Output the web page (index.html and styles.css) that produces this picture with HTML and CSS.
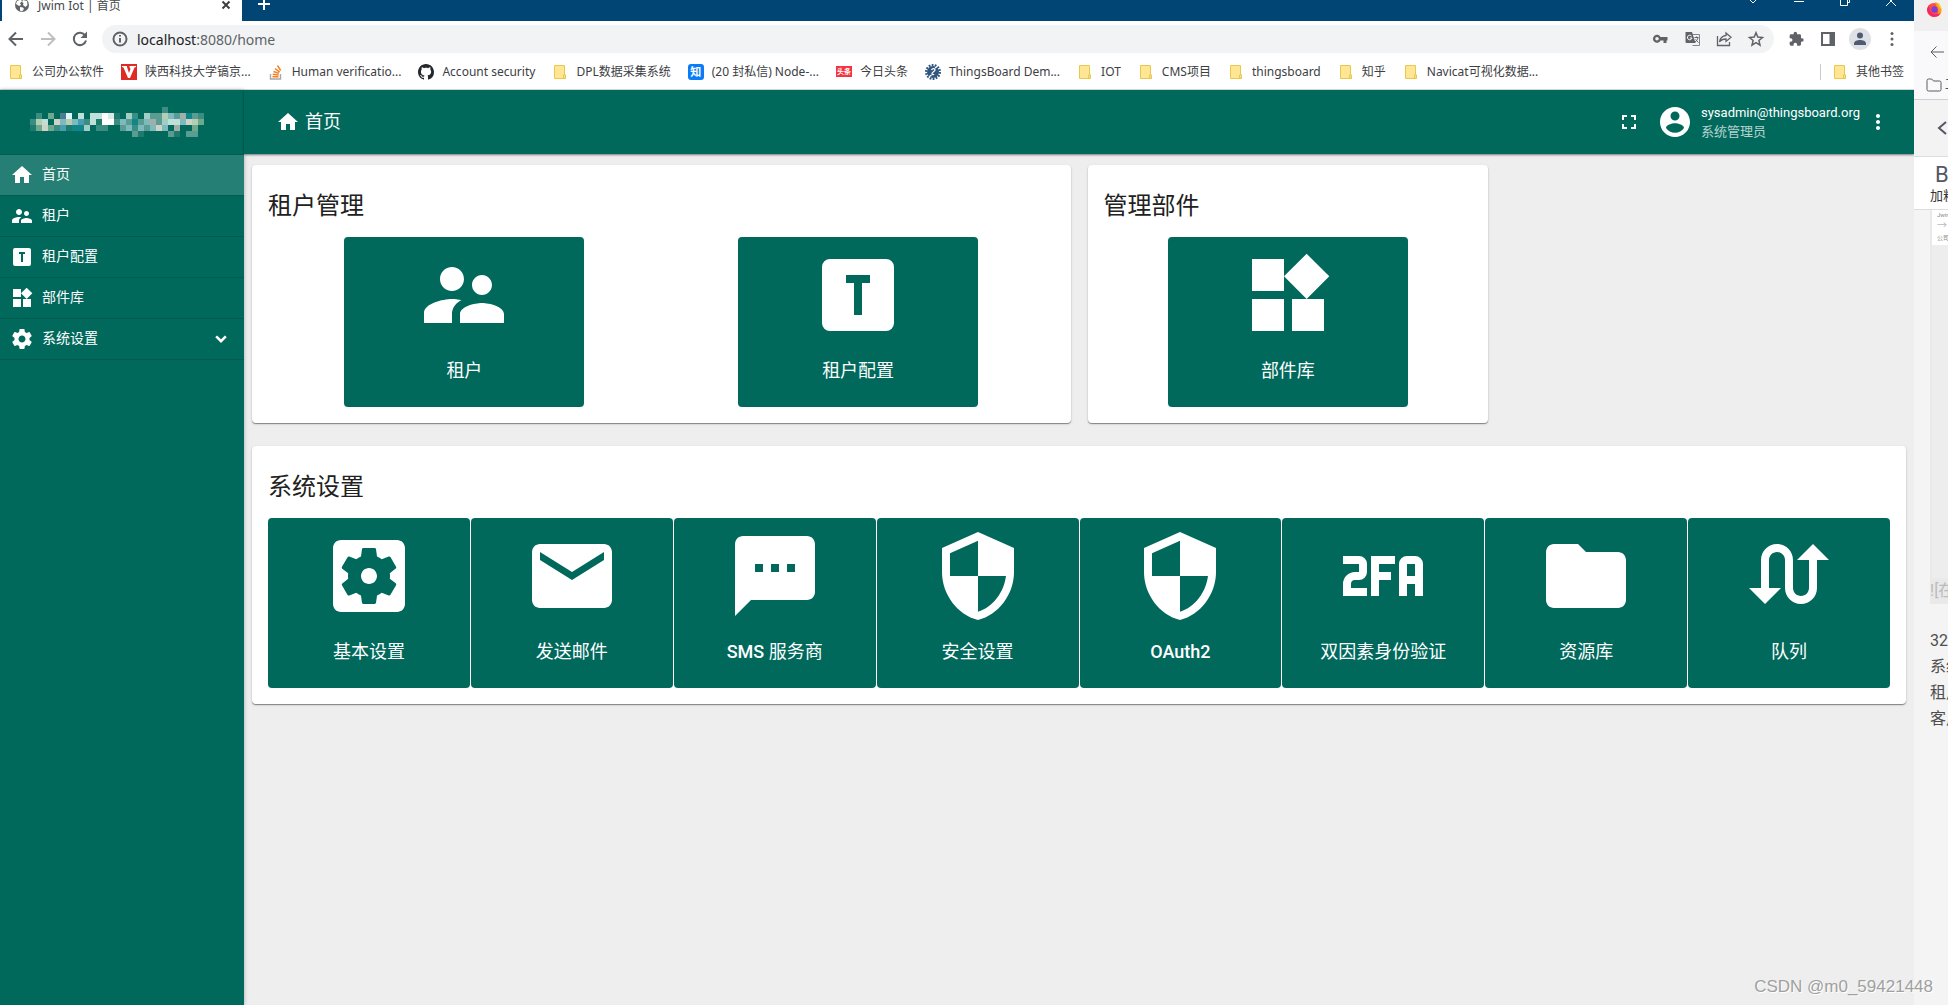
FILE: index.html
```html
<!DOCTYPE html>
<html lang="zh-CN">
<head>
<meta charset="utf-8">
<meta name="viewport" content="width=device-width, initial-scale=1">
<title>Jwim Iot | 首页</title>
<link rel="stylesheet" href="styles.css">
</head>
<body>
<svg class="sprite" aria-hidden="true">
  <symbol id="i-home" viewBox="0 0 24 24"><path d="M10 20v-6h4v6h5v-8h3L12 3 2 12h3v8z"/></symbol>
  <symbol id="i-people" viewBox="0 0 24 24"><path d="M16.5 12c1.38 0 2.49-1.12 2.49-2.5S17.88 7 16.5 7C15.12 7 14 8.12 14 9.5s1.12 2.5 2.5 2.5zM9 11c1.66 0 2.99-1.34 2.99-3S10.66 5 9 5C7.34 5 6 6.34 6 8s1.34 3 3 3zm7.5 3c-1.83 0-5.5.92-5.5 2.75V19h11v-2.25c0-1.83-3.67-2.75-5.5-2.75zM9 13c-2.33 0-7 1.17-7 3.5V19h7v-2.25c0-.85.33-2.34 2.37-3.47C10.5 13.1 9.66 13 9 13z"/></symbol>
  <symbol id="i-profile" viewBox="0 0 24 24"><path d="M5,3H19A2,2 0 0,1 21,5V19A2,2 0 0,1 19,21H5A2,2 0 0,1 3,19V5A2,2 0 0,1 5,3M9,7V9H11V17H13V9H15V7H9Z"/></symbol>
  <symbol id="i-widgets" viewBox="0 0 24 24"><path d="M13 13v8h8v-8h-8zM3 21h8v-8H3v8zM3 3v8h8V3H3zm13.66-1.31L11 7.34 16.66 13l5.66-5.66-5.66-5.65z"/></symbol>
  <symbol id="i-settings" viewBox="0 0 24 24"><path d="M19.43 12.98c.04-.32.07-.64.07-.98s-.03-.66-.07-.98l2.11-1.65c.19-.15.24-.42.12-.64l-2-3.46c-.12-.22-.39-.3-.61-.22l-2.49 1c-.52-.4-1.08-.73-1.69-.98l-.38-2.65C14.46 2.18 14.25 2 14 2h-4c-.25 0-.46.18-.49.42l-.38 2.65c-.61.25-1.17.59-1.69.98l-2.49-1c-.23-.09-.49 0-.61.22l-2 3.46c-.13.22-.07.49.12.64l2.11 1.65c-.04.32-.07.65-.07.98s.03.66.07.98l-2.11 1.65c-.19.15-.24.42-.12.64l2 3.46c.12.22.39.3.61.22l2.49-1c.52.4 1.08.73 1.69.98l.38 2.65c.03.24.24.42.49.42h4c.25 0 .46-.18.49-.42l.38-2.65c.61-.25 1.17-.59 1.69-.98l2.49 1c.23.09.49 0 .61-.22l2-3.46c.12-.22.07-.49-.12-.64l-2.11-1.65zM12 15.5c-1.93 0-3.5-1.57-3.5-3.5s1.57-3.5 3.5-3.5 3.5 1.57 3.5 3.5-1.57 3.5-3.5 3.5z"/></symbol>
  <symbol id="i-general" viewBox="0 0 24 24"><path d="M12 10c-1.1 0-2 .9-2 2s.9 2 2 2 2-.9 2-2-.9-2-2-2zm7-7H5c-1.11 0-2 .9-2 2v14c0 1.1.89 2 2 2h14c1.11 0 2-.9 2-2V5c0-1.1-.89-2-2-2zm-1.75 9c0 .23-.02.46-.05.68l1.48 1.16c.13.11.17.3.08.45l-1.4 2.42c-.09.15-.27.21-.43.15l-1.74-.7c-.36.28-.76.51-1.18.69l-.26 1.85c-.03.17-.18.3-.35.3h-2.8c-.17 0-.32-.13-.35-.29l-.26-1.85c-.43-.18-.82-.41-1.18-.69l-1.74.7c-.16.06-.34 0-.43-.15l-1.4-2.42c-.09-.15-.05-.34.08-.45l1.48-1.16c-.03-.23-.05-.46-.05-.69 0-.23.02-.46.05-.68l-1.48-1.16c-.13-.11-.17-.3-.08-.45l1.4-2.42c.09-.15.27-.21.43-.15l1.74.7c.36-.28.76-.51 1.18-.69l.26-1.85c.03-.17.18-.3.35-.3h2.8c.17 0 .32.13.35.29l.26 1.85c.43.18.82.41 1.18.69l1.74-.7c.16-.06.34 0 .43.15l1.4 2.42c.09.15.05.34-.08.45l-1.48 1.16c.03.23.05.46.05.69z"/></symbol>
  <symbol id="i-mail" viewBox="0 0 24 24"><path d="M20 4H4c-1.1 0-1.99.9-1.99 2L2 18c0 1.1.9 2 2 2h16c1.1 0 2-.9 2-2V6c0-1.1-.9-2-2-2zm0 4l-8 5-8-5V6l8 5 8-5v2z"/></symbol>
  <symbol id="i-sms" viewBox="0 0 24 24"><path d="M20 2H4c-1.1 0-1.99.9-1.99 2L2 22l4-4h14c1.1 0 2-.9 2-2V4c0-1.1-.9-2-2-2zM9 11H7V9h2v2zm4 0h-2V9h2v2zm4 0h-2V9h2v2z"/></symbol>
  <symbol id="i-security" viewBox="0 0 24 24"><path d="M12 1L3 5v6c0 5.55 3.84 10.74 9 12 5.16-1.26 9-6.45 9-12V5l-9-4zm0 10.99h7c-.53 4.12-3.28 7.79-7 8.94V12H5V6.3l7-3.11v8.8z"/></symbol>
  <symbol id="i-2fa" viewBox="0 0 24 24"><path fill="none" stroke="currentColor" stroke-width="2" d="M2 8h4a1 1 0 0 1 1 1v2a1 1 0 0 1-1 1H5a2 2 0 0 0-2 2v2h5M10 17V8h5M10 12h4M17 17V9a1 1 0 0 1 1-1h2a1 1 0 0 1 1 1v8M17 13h4"/></symbol>
  <symbol id="i-folder" viewBox="0 0 24 24"><path d="M10 4H4c-1.1 0-1.99.9-1.99 2L2 18c0 1.1.9 2 2 2h16c1.1 0 2-.9 2-2V8c0-1.1-.9-2-2-2h-8l-2-2z"/></symbol>
  <symbol id="i-queue" viewBox="0 0 24 24"><path d="M18 4l-4 4h3v7c0 1.1-.9 2-2 2s-2-.9-2-2V8c0-2.21-1.79-4-4-4S5 5.79 5 8v7H2l4 4 4-4H7V8c0-1.1.9-2 2-2s2 .9 2 2v7c0 2.21 1.79 4 4 4s4-1.79 4-4V8h3l-4-4z"/></symbol>
  <symbol id="i-more" viewBox="0 0 24 24"><path d="M12 8c1.1 0 2-.9 2-2s-.9-2-2-2-2 .9-2 2 .9 2 2 2zm0 2c-1.1 0-2 .9-2 2s.9 2 2 2 2-.9 2-2-.9-2-2-2zm0 6c-1.1 0-2 .9-2 2s.9 2 2 2 2-.9 2-2-.9-2-2-2z"/></symbol>
  <symbol id="b-folder" viewBox="0 0 16 16"><path fill="#ffe694" stroke="#e8c84e" d="M2.500 1.500h10v9.500h1v3.500h-11z"/><path fill="#ffe694" stroke="#e8c84e" d="M11.500 14v-3h2v3z"/></symbol>
</svg>

<div class="desktop">
  <div class="browser">
    <div class="tabstrip">
      <div class="tab">
        <svg class="ic16" viewBox="0 0 16 16"><circle cx="8" cy="8" r="7" fill="#5f6368"/><path fill="#fff" d="M3 4l4-1.500 1 2-2 1.500 1 2-2 1-3-2zM9 3l4 1 .5 4-2 2-2.500-2 .5-2-1.500-1zM6 10l3 .5 1 1.500-2 2.500-2-1z"/></svg>
        <span class="tab-title">Jwim Iot | 首页</span>
        <button class="plain" aria-label="关闭标签页"><svg class="ic16" viewBox="0 0 16 16"><path class="ln" stroke="#3c4043" d="M4.500 4.500l7 7m0-7l-7 7"/></svg></button>
      </div>
      <button class="plain newtab" aria-label="新标签页"><svg class="ic16" viewBox="0 0 16 16"><path class="ln" stroke="#fff" d="M8 2v12M2 8h12"/></svg></button>
      <div class="winctl">
        <button class="plain" aria-label="搜索标签页"><svg class="ic16" viewBox="0 0 16 16"><path class="ln1" stroke="#fff" d="M4 3l4 4 4-4"/></svg></button>
        <button class="plain" aria-label="最小化"><svg class="ic16" viewBox="0 0 16 16"><path class="ln1" stroke="#fff" d="M3 5.500h10"/></svg></button>
        <button class="plain" aria-label="还原"><svg class="ic16" viewBox="0 0 16 16"><path class="ln1" stroke="#fff" d="M3.500 1.500h7v8h-7zM10.500 6.500h2v-7"/></svg></button>
        <button class="plain" aria-label="关闭"><svg class="ic16" viewBox="0 0 16 16"><path class="ln1" stroke="#fff" d="M3 0l10 10M13 0L3 10"/></svg></button>
      </div>
    </div>

    <div class="toolbar">
      <button class="plain" aria-label="后退"><svg class="ic16" viewBox="0 0 16 16"><path class="ln" stroke="#5f6368" d="M15 8H2.500M8 1.500L1.500 8 8 14.500"/></svg></button>
      <button class="plain" aria-label="前进"><svg class="ic16" viewBox="0 0 16 16"><path class="ln" stroke="#bdbfc1" d="M1 8h12.500M8 1.500L14.500 8 8 14.500"/></svg></button>
      <button class="plain" aria-label="重新加载"><svg class="ic16" viewBox="0 0 16 16"><path class="ln" stroke="#5f6368" d="M13.200 4.500A6.200 6.200 0 1 0 14 9.500"/><path fill="#5f6368" d="M15 .5V7H8.500z"/></svg></button>
      <div class="omnibox">
        <svg class="ic16" viewBox="0 0 16 16"><circle class="ln" stroke="#5f6368" cx="8" cy="8" r="6.500"/><path class="ln" stroke="#5f6368" d="M8 7v4.500M8 4v1.600"/></svg>
        <div class="url"><label for="url">localhost</label><input id="url" type="text" value=":8080/home"></div>
        <button class="plain" aria-label="密码"><svg class="ic16" viewBox="0 0 16 16"><path fill="#5f6368" fill-rule="evenodd" d="M8.500 6H15.500v3.500H14.500V12h-3V9.500h-3A4 4 0 1 1 8.500 6zM5 6a1.800 1.800 0 1 0 0 3.600A1.800 1.800 0 0 0 5 6z"/></svg></button>
        <button class="plain" aria-label="翻译此页"><svg class="ic16" viewBox="0 0 16 16"><path fill="none" stroke="#80868b" d="M6 3.500h9.500v11H8.500"/><path fill="#5f6368" d="M1.500 1H8l3.500 11H2.500a1 1 0 0 1-1-1z"/><path fill="none" stroke="#fff" d="M7.500 5A2.300 2.300 0 1 0 8 7H5.800"/><path fill="none" stroke="#5f6368" d="M10.500 6.500h4M12.500 5.500v1M14 6.500c-.5 2-1.500 3.500-3 4.500M11.500 8.500l3 3"/></svg></button>
        <button class="plain" aria-label="分享"><svg class="ic16" viewBox="0 0 16 16"><path fill="none" stroke="#5f6368" stroke-width="1.300" d="M1.500 5v9.500h12V11M10 2l5 4.200-5 4.200V8c-3 0-5 .8-6.500 3C4 7.500 6 5 10 4.500z"/></svg></button>
        <button class="plain" aria-label="收藏"><svg class="ic16" viewBox="0 0 16 16"><path fill="none" stroke="#5f6368" stroke-width="1.500" d="M8 1.800l1.800 4.300 4.700.4-3.600 3 1.100 4.600L8 11.700l-4 2.400 1.100-4.600-3.600-3 4.700-.4z"/></svg></button>
      </div>
      <button class="plain" aria-label="扩展程序"><svg class="ic16" viewBox="0 0 24 24"><path fill="#5f6368" d="M21 11h-1.500V7a2 2 0 0 0-2-2h-4V3.500a2.500 2.500 0 0 0-5 0V5h-4a2 2 0 0 0-2 2v3.800H4a2.700 2.700 0 0 1 0 5.400H2.500V20a2 2 0 0 0 2 2h3.800v-1.500a2.700 2.700 0 0 1 5.400 0V22h3.800a2 2 0 0 0 2-2v-4H21a2.500 2.500 0 0 0 0-5z"/></svg></button>
      <button class="plain" aria-label="侧边栏"><svg class="ic16" viewBox="0 0 16 16"><path fill="#5f6368" fill-rule="evenodd" d="M1 1h14v14H1zM3 3v10h6.500V3z"/></svg></button>
      <button class="plain avatar" aria-label="个人资料"><svg class="ic16" viewBox="0 0 16 16"><circle cx="8" cy="4.500" r="3" fill="#505a70"/><path fill="#505a70" d="M2 14v-1.500C2 10 5.500 9 8 9s6 1 6 3.500V14z"/></svg></button>
      <button class="plain" aria-label="菜单"><svg class="ic16" viewBox="0 0 16 16"><g fill="#5f6368"><circle cx="8" cy="2.500" r="1.500"/><circle cx="8" cy="8" r="1.500"/><circle cx="8" cy="13.500" r="1.500"/></g></svg></button>
    </div>

    <nav class="bookmarks" aria-label="书签栏">
      <a href="#"><svg class="ic16"><use href="#b-folder"/></svg>公司办公软件</a>
      <a href="#"><svg class="ic16" viewBox="0 0 16 16"><path fill="#de2c25" d="M0 0h16v16H0z"/><path fill="#fff" d="M1 2h5v1l2 6 1.500-4L8.500 3V2H15v1l-1.500.5L9 14H7L2.500 3.500 1 3z"/></svg>陕西科技大学镐京...</a>
      <a href="#"><svg class="ic16" viewBox="0 0 16 16"><path fill="none" stroke="#a6a8ab" stroke-width="1.400" d="M2.500 10v5h10v-5"/><path fill="none" stroke="#f48024" stroke-width="1.400" d="M4.500 12.800h6M4.700 10.300l6 .7M5.500 7.500l5.500 1.900M7 4.500l4.700 3.600M9.500 1.500l3.200 5"/></svg>Human verificatio...</a>
      <a href="#"><svg class="ic16" viewBox="0 0 16 16"><path fill="#24292f" d="M8 0C3.580 0 0 3.580 0 8c0 3.540 2.290 6.530 5.470 7.590.4.070.55-.17.55-.38 0-.19-.01-.82-.01-1.490-2.010.37-2.530-.49-2.690-.94-.09-.23-.48-.94-.82-1.130-.28-.15-.68-.52-.01-.53.63-.01 1.080.58 1.230.82.72 1.210 1.870.87 2.330.66.07-.52.28-.87.51-1.070-1.780-.2-3.640-.89-3.640-3.950 0-.87.31-1.590.82-2.150-.08-.2-.36-1.020.08-2.120 0 0 .67-.21 2.200.82.64-.18 1.320-.27 2-.27s1.360.09 2 .27c1.530-1.040 2.200-.82 2.200-.82.44 1.100.16 1.920.08 2.120.51.56.82 1.270.82 2.150 0 3.070-1.870 3.750-3.650 3.950.29.25.54.73.54 1.480 0 1.070-.01 1.930-.01 2.200 0 .21.15.46.55.38A8.010 8.010 0 0 0 16 8c0-4.420-3.580-8-8-8z"/></svg>Account security</a>
      <a href="#"><svg class="ic16"><use href="#b-folder"/></svg>DPL数据采集系统</a>
      <a href="#"><span class="fav zhi">知</span>(20 封私信) Node-...</a>
      <a href="#"><span class="fav tt">头条</span>今日头条</a>
      <a href="#"><svg class="ic16" viewBox="0 0 16 16"><circle cx="8" cy="8" r="6.800" fill="none" stroke="#305680" stroke-width="2.400" stroke-dasharray="1.800 1.250"/><circle cx="8" cy="8" r="6" fill="#305680"/><path fill="none" stroke="#fff" stroke-width="1.300" d="M6.500 6c1-2 3.500-1.500 3.500 0S7 8 7 9.500s1.500 1.500 2 .5M10 4l2-1.500M6.500 11L4 13"/></svg>ThingsBoard Dem...</a>
      <a href="#"><svg class="ic16"><use href="#b-folder"/></svg>IOT</a>
      <a href="#"><svg class="ic16"><use href="#b-folder"/></svg>CMS项目</a>
      <a href="#"><svg class="ic16"><use href="#b-folder"/></svg>thingsboard</a>
      <a href="#"><svg class="ic16"><use href="#b-folder"/></svg>知乎</a>
      <a href="#"><svg class="ic16"><use href="#b-folder"/></svg>Navicat可视化数据...</a>
      <a href="#" class="other"><svg class="ic16"><use href="#b-folder"/></svg>其他书签</a>
    </nav>

    <div class="app">
      <aside class="sidebar">
        <div class="brand">
          <svg viewBox="0 0 29 5" shape-rendering="crispEdges" role="img" aria-label="徽标">
            <path fill="#3a8d80" d="M22 0h1v1h-1zM1 1h1v1H1zM17 1h1v1h-1zM0 2h1v1H0zM9 2h1v1H9zM14 2h1v1h-1zM4 3h1v1H4zM11 3h2v1h-2zM17 3h1v1h-1zM28 1h1v1h-1z"/>
            <path fill="#6fa98d" d="M3 1h1v1H3zM1 3h1v1H1zM3 3h1v1H3zM27 3h1v1h-1zM28 2h1v1h-1z"/>
            <path fill="#4a7f8e" d="M5 1h1v1H5z"/>
            <path fill="#dff5fb" d="M6 1h1v1H6z"/>
            <path fill="#bfe0d8" d="M8 1h1v1H8zM2 2h1v1H2zM10 1h2v1h-2zM10 2h1v1h-1zM23 2h2v1h-2z"/>
            <path fill="#dbeae6" d="M13 1h1v1h-1z"/>
            <path fill="#ffffff" d="M12 1h1v2h-1zM13 2h1v1h-1z"/>
            <path fill="#a0cdc4" d="M16 1h1v1h-1zM19 1h1v1h-1zM9 3h1v1H9zM22 2h1v1h-1z"/>
            <path fill="#5a9c92" d="M20 1h2v1h-2zM24 1h1v1h-1zM27 1h1v1h-1zM16 2h1v1h-1zM18 2h1v1h-1zM21 2h1v1h-1zM15 3h1v1h-1zM19 3h1v1h-1zM17 4h1v1h-1zM26 4h1v1h-1zM27 4h1v1h-1zM23 4h1v1h-1z"/>
            <path fill="#b5cdb0" d="M22 1h1v1h-1zM6 2h1v1H6zM1 2h1v1H1zM27 2h1v1h-1z"/>
            <path fill="#7fb9c0" d="M23 1h1v1h-1zM7 2h1v1H7zM5 2h1v1H5zM15 2h1v1h-1zM19 2h1v1h-1zM16 3h1v1h-1zM18 3h1v1h-1zM25 2h1v1h-1zM20 3h1v1h-1zM22 3h1v1h-1z"/>
            <path fill="#a0b0a8" d="M25 1h1v1h-1zM20 2h1v1h-1zM24 3h1v1h-1z"/>
            <path fill="#0f868a" d="M26 1h1v1h-1zM7 3h2v1H7zM17 2h1v1h-1z"/>
            <path fill="#d0d2c8" d="M4 2h1v1H4zM2 3h1v1H2zM21 3h1v1h-1zM26 2h1v1h-1z"/>
            <path fill="#4a9cb0" d="M8 2h1v1H8zM5 3h1v1H5z"/>
            <path fill="#1d7a6c" d="M0 3h1v1H0zM6 3h1v1H6zM11 2h1v1h-1zM14 1h1v1h-1zM18 4h1v1h-1zM24 4h1v1h-1z"/>
          </svg>
        </div>
        <nav class="menu">
          <a href="#" class="active"><svg class="ic24"><use href="#i-home"/></svg><span>首页</span></a>
          <a href="#"><svg class="ic24"><use href="#i-people"/></svg><span>租户</span></a>
          <a href="#"><svg class="ic24"><use href="#i-profile"/></svg><span>租户配置</span></a>
          <a href="#"><svg class="ic24"><use href="#i-widgets"/></svg><span>部件库</span></a>
          <a href="#"><svg class="ic24"><use href="#i-settings"/></svg><span>系统设置</span><svg class="ic16 caret" viewBox="0 0 16 16"><path fill="none" stroke="currentColor" stroke-width="3" d="M2.500 5L8 10.500 13.500 5"/></svg></a>
        </nav>
      </aside>

      <div class="page">
        <header class="topbar">
          <h1><svg class="ic24"><use href="#i-home"/></svg>首页</h1>
          <button class="plain full" aria-label="全屏"><svg class="ic24" viewBox="0 0 24 24"><path d="M7 14H5v5h5v-2H7v-3zm-2-4h2V7h3V5H5v5zm12 7h-3v2h5v-5h-2v3zM14 5v2h3v3h2V5h-5z"/></svg></button>
          <svg class="ic36" viewBox="0 0 24 24"><path d="M12 2C6.480 2 2 6.480 2 12s4.480 10 10 10 10-4.480 10-10S17.520 2 12 2zm0 3c1.660 0 3 1.340 3 3s-1.340 3-3 3-3-1.340-3-3 1.340-3 3-3zm0 14.200c-2.500 0-4.710-1.280-6-3.220.03-1.990 4-3.080 6-3.080 1.990 0 5.970 1.090 6 3.080-1.290 1.940-3.500 3.220-6 3.220z"/></svg>
          <div class="user"><span>sysadmin@thingsboard.org</span><span class="role">系统管理员</span></div>
          <button class="plain" aria-label="更多"><svg class="ic24"><use href="#i-more"/></svg></button>
        </header>

        <main class="content">
          <section class="card half">
            <h2>租户管理</h2>
            <div class="tiles two">
              <a href="#" class="tile"><svg class="ic96"><use href="#i-people"/></svg><span>租户</span></a>
              <a href="#" class="tile"><svg class="ic96"><use href="#i-profile"/></svg><span>租户配置</span></a>
            </div>
          </section>
          <section class="card">
            <h2>管理部件</h2>
            <div class="tiles one">
              <a href="#" class="tile"><svg class="ic96"><use href="#i-widgets"/></svg><span>部件库</span></a>
            </div>
          </section>
          <section class="card wide">
            <h2>系统设置</h2>
            <div class="tiles eight">
              <a href="#" class="tile"><svg class="ic96"><use href="#i-general"/></svg><span>基本设置</span></a>
              <a href="#" class="tile"><svg class="ic96"><use href="#i-mail"/></svg><span>发送邮件</span></a>
              <a href="#" class="tile"><svg class="ic96"><use href="#i-sms"/></svg><span><b>SMS</b> 服务商</span></a>
              <a href="#" class="tile"><svg class="ic96"><use href="#i-security"/></svg><span>安全设置</span></a>
              <a href="#" class="tile"><svg class="ic96"><use href="#i-security"/></svg><span><b>OAuth2</b></span></a>
              <a href="#" class="tile"><svg class="ic96"><use href="#i-2fa"/></svg><span>双因素身份验证</span></a>
              <a href="#" class="tile"><svg class="ic96"><use href="#i-folder"/></svg><span>资源库</span></a>
              <a href="#" class="tile"><svg class="ic96"><use href="#i-queue"/></svg><span>队列</span></a>
            </div>
          </section>
        </main>
      </div>
    </div>
  </div>

  <div class="second">
    <div class="s-tabs"><svg class="ic16" viewBox="0 0 16 16"><circle cx="8" cy="9" r="7" fill="#ff4f3a"/><path fill="#ff9a1f" d="M9 1c3 1 6.500 3.500 6.500 8.500S11 16 8 16c4-1 5-4 4-7S9.500 4 9 1z"/><path fill="#ffd23c" d="M12 1.500c2 1.500 3.800 4 3.500 8-1-3-3.500-4-3.500-8z"/><path fill="#f5256b" d="M1 8c.5 5 4 8 8 7.800C13 15.500 14 13 14 12c-3 2.500-9 2-10-3L3 4z"/><circle cx="8.500" cy="8.500" r="3.200" fill="#7a3fe0"/></svg></div>
    <div class="s-nav"><svg class="ic16" viewBox="0 0 16 16"><path class="ln1" stroke="#5b5b66" d="M15 8H2M7.500 2.500L2 8l5.500 5.500"/></svg></div>
    <div class="s-marks"><svg class="ic16" viewBox="0 0 16 16"><path class="ln1" stroke="#5b5b66" d="M1 3.500a1.500 1.500 0 0 1 1.500-1.500h3.200l1.800 2h6a1.500 1.500 0 0 1 1.500 1.500v7a1.500 1.500 0 0 1-1.500 1.500h-11A1.500 1.500 0 0 1 1 12.500z"/></svg><span>工</span></div>
    <div class="s-head"><svg class="ic16" viewBox="0 0 16 16"><path class="ln" stroke="#555666" d="M12 2L5 8l7 6"/></svg></div>
    <div class="s-tool"><b>B</b><span>加粗</span></div>
    <div class="s-body">
      <div class="s-shot">
        <div class="thumb"><span>Jwim</span><span class="arrow">→</span><span>公司办</span></div>
        <p>![在</p>
      </div>
      <p>32</p>
      <p>系统</p>
      <p>租户</p>
      <p>客户</p>
    </div>
  </div>
  <div class="watermark">CSDN @m0_59421448</div>
</div>
</body>
</html>
```
FILE: styles.css
```css
* { box-sizing: border-box; }

:root {
  --green: #00695c;
  --latin: Roboto, "Noto Sans CJK SC", sans-serif;
  --chrome: "Noto Sans", "Noto Sans CJK SC", sans-serif;
}

body { margin: 0; font-family: var(--latin); overflow-x: hidden; }
h1, h2, p { margin: 0; font-weight: 400; }
a { color: inherit; text-decoration: none; }
svg { display: block; flex: none; fill: currentColor; }

.sprite { position: absolute; width: 0; height: 0; }
.ic16 { width: 16px; height: 16px; overflow: visible; }
.ic24 { width: 24px; height: 24px; }
.ic36 { width: 36px; height: 36px; }
.ic96 { width: 96px; height: 96px; }
.ln { fill: none; stroke-width: 2; }
.ln1 { fill: none; stroke-width: 1; }

.plain {
  display: flex;
  align-items: center;
  justify-content: center;
  flex: none;
  padding: 0;
  border: 0;
  background: none;
  color: inherit;
}

.desktop { position: relative; display: flex; min-height: 100vh; }
.browser { flex: 1; min-width: 0; display: flex; flex-direction: column; background: #fff; }

/* Tab strip */
.tabstrip {
  display: flex;
  align-items: flex-end;
  height: 21px;
  overflow: hidden;
  background: #004574;
  font-family: var(--chrome);
  font-size: 12px;
}
.tab {
  display: flex;
  align-items: center;
  gap: 8px;
  width: 240px;
  height: 33px;
  margin-left: 2px;
  padding: 0 8px 0 12px;
  background: #fff;
  color: #45494d;
}
.tab-title { flex: 1; }
.newtab { height: 34px; margin-left: 14px; }
.winctl { display: flex; gap: 30px; height: 34px; margin-left: auto; padding-right: 15px; }

/* Address row */
.toolbar {
  display: flex;
  align-items: center;
  gap: 16px;
  height: 36px;
  padding: 0 14px 0 8px;
}
.omnibox {
  flex: 1;
  display: flex;
  align-items: center;
  gap: 16px;
  height: 28px;
  margin-left: -2px;
  margin-right: -2px;
  padding: 0 10px;
  border-radius: 14px;
  background: #f1f3f4;
}
.url {
  flex: 1;
  display: flex;
  align-items: center;
  margin-left: -7px;
  font-family: var(--chrome);
  font-size: 14px;
  color: #202124;
}
.url input {
  flex: 1;
  padding: 0;
  border: 0;
  outline: 0;
  background: none;
  font: inherit;
  color: #5f6368;
}
.avatar { width: 22px; height: 22px; margin: 0 -3px; border-radius: 50%; background: #dee1e6; }

/* Bookmarks row */
.bookmarks {
  display: flex;
  align-items: center;
  gap: 17px;
  height: 33px;
  padding: 0 10px 3px 8px;
  border-bottom: 1px solid #d5e0de;
  font-family: var(--chrome);
  font-size: 12px;
  line-height: 20px;
  color: #3c4043;
  white-space: nowrap;
}
.bookmarks a { display: flex; align-items: center; gap: 8px; }
.bookmarks .other { margin-left: auto; padding-left: 11px; border-left: 1px solid #c8cacc; line-height: 16px; }
.fav {
  display: flex;
  align-items: center;
  justify-content: center;
  width: 16px;
  height: 16px;
  color: #fff;
  font-weight: 700;
}
.zhi { border-radius: 3px; background: #0a7cf7; font-size: 11px; }
.tt { height: 11px; background: #f5343f; font-size: 7px; }

/* Application */
.app { flex: 1; display: flex; background: #eee; }
.sidebar {
  width: 244px;
  flex: none;
  background: var(--green);
  color: #fff;
  box-shadow: 0 0 4px rgba(0, 0, 0, .3);
}
.brand {
  display: flex;
  align-items: center;
  height: 65px;
  padding: 0 30px;
  border-bottom: 1px solid #005c51;
}
.brand svg { width: 174px; height: 30px; }
.menu a {
  display: flex;
  align-items: center;
  gap: 8px;
  height: 41px;
  padding: 0 16px 0 10px;
  border-bottom: 1px solid #005c51;
  font-size: 14px;
}
.menu a span { flex: 1; padding-bottom: 4px; }
.menu .active { background: #267f74; }
.menu .caret { width: 14px; height: 14px; }

.page { flex: 1; min-width: 0; }
.topbar {
  display: flex;
  align-items: center;
  height: 64px;
  padding: 0 24px 0 32px;
  background: var(--green);
  color: #fff;
  box-shadow: 0 1px 2px rgba(0, 0, 0, .5);
}
.topbar h1 { display: flex; align-items: center; gap: 5px; font-size: 18px; line-height: 26px; }
.full { margin: 0 16px 0 auto; }
.user {
  display: flex;
  flex-direction: column;
  width: 165px;
  margin-left: 8px;
  font-size: 13px;
  line-height: 19px;
}
.role { opacity: .7; }

.content {
  display: grid;
  grid-template-columns: repeat(4, 1fr);
  gap: 23px 17px;
  padding: 11px 8px;
}
.card {
  padding: 24px 16px 16px;
  border-radius: 4px;
  background: #fff;
  box-shadow: 0 1px 1px rgba(0, 0, 0, .4), 0 1px 3px rgba(0, 0, 0, .12);
}
.half { grid-column: span 2; }
.wide { grid-column: span 4; }
.card h2 { margin-bottom: 14px; font-size: 24px; line-height: 34px; color: #212121; }
.tiles { display: grid; justify-items: center; gap: 1px; }
.two { grid-template-columns: repeat(2, 1fr); }
.eight { grid-template-columns: repeat(8, 1fr); }
.tile {
  display: flex;
  flex-direction: column;
  align-items: center;
  gap: 16px;
  width: 100%;
  max-width: 240px;
  height: 170px;
  padding: 10px 0;
  border-radius: 4px;
  background: var(--green);
  color: #fff;
  font-size: 18px;
  line-height: 24px;
}
.tile b { font-weight: 500; }

/* Window behind, cut off by the screen edge */
.second {
  width: 34px;
  flex: none;
  overflow: hidden;
  background: #f4f4f4;
  color: #4f4f4f;
  white-space: nowrap;
}
.s-tabs { height: 31px; padding: 1px 12px; background: #f0f0f1; }
.s-nav { height: 41px; padding: 13px 15px; background: #f9f9fb; }
.s-marks {
  display: flex;
  gap: 3px;
  height: 28px;
  padding: 5px 12px;
  border-bottom: 1px solid #cfcfd2;
  background: #f9f9fb;
  font-size: 12px;
  line-height: 16px;
}
.s-head { height: 57px; padding: 20px 20px; border-bottom: 1px solid #ddd; background: #f3f3f4; }
.s-tool {
  display: flex;
  flex-direction: column;
  height: 53px;
  padding: 6px 0 0 16px;
  border-bottom: 1px solid #ddd;
  background: #fff;
  font-size: 13px;
  line-height: 18px;
  color: #333;
}
.s-tool b { padding-left: 5px; font-size: 22px; font-weight: 400; line-height: 24px; color: #555666; }
.s-body { padding-left: 16px; font-size: 16px; line-height: 26px; }
.s-shot {
  display: flex;
  flex-direction: column;
  justify-content: space-between;
  height: 394px;
  margin-bottom: 24px;
  border-left: 2px solid #e9e9e9;
  background: #ededed;
  color: #bbb;
}
.s-shot p { margin-left: -2px; background: #e9e9e9; }
.thumb {
  display: flex;
  flex-direction: column;
  height: 35px;
  padding-left: 5px;
  background: #fff;
  font-size: 6px;
  line-height: 9px;
  color: #888;
}
.thumb .arrow { font-size: 10px; line-height: 14px; color: #bbb; }

.watermark {
  position: absolute;
  right: 15px;
  bottom: 8px;
  font-family: "Liberation Sans", Arial, sans-serif;
  font-size: 17px;
  line-height: 20px;
  color: #a0a0a0;
  text-shadow: 1px 1px 0 #fff;
}
```
